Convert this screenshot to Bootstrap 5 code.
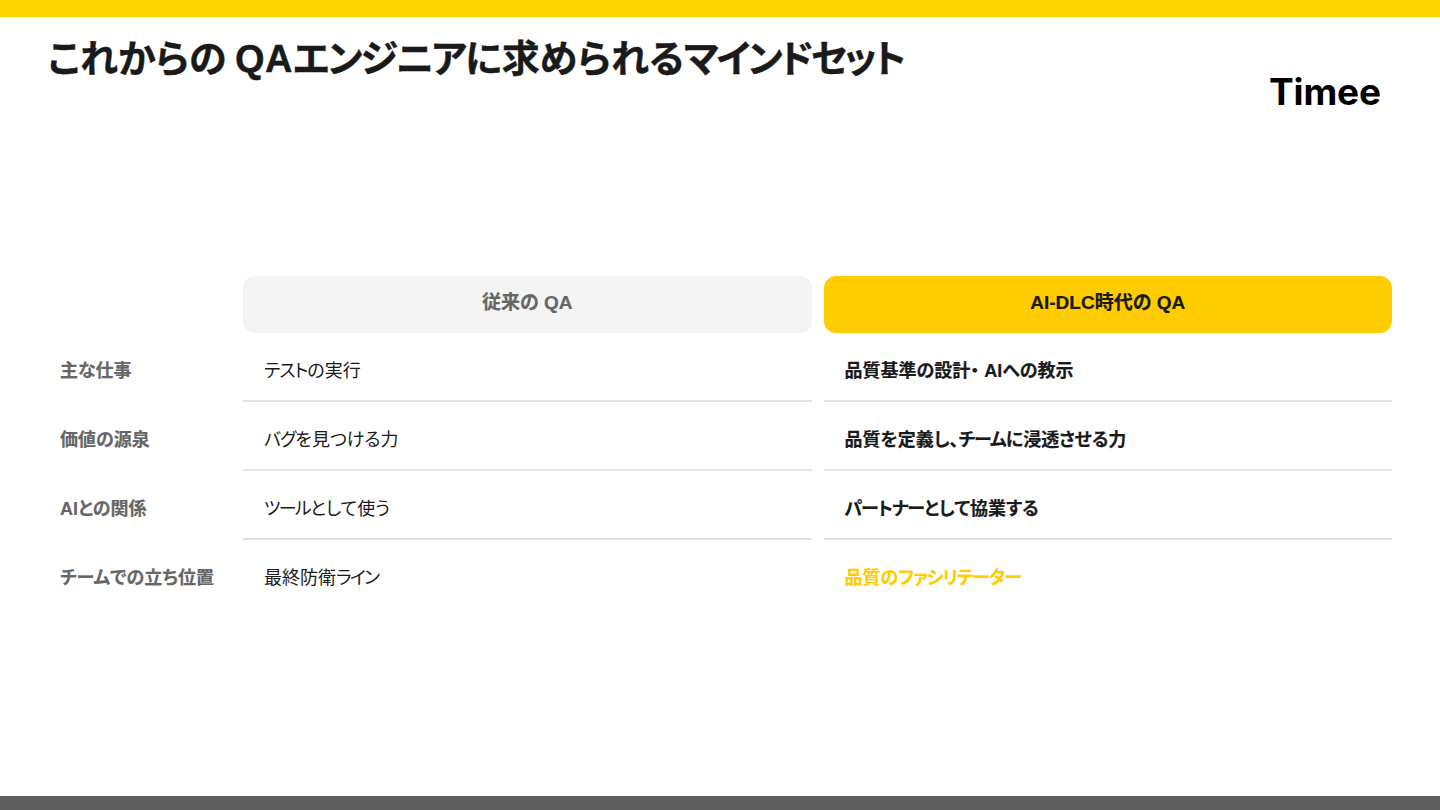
<!DOCTYPE html>
<html lang="ja">
<head>
<meta charset="utf-8">
<title>これからの QAエンジニアに求められるマインドセット</title>
<link href="https://cdn.jsdelivr.net/npm/bootstrap@5.3.0/dist/css/bootstrap.min.css" rel="stylesheet">
<style>
html,body{height:810px;overflow:hidden;background:#fff}
body{font-family:"Liberation Sans","Noto Sans CJK JP",sans-serif;color:#1a1a1a;font-feature-settings:"palt"}
.slide-top{height:17px;background:#ffd700;flex:none}
.slide-bottom{height:14px;background:#5f5f5f;flex:none}
.slide-head{height:259px;padding:20px 48px 0;flex:none}
.slide-title{font-size:38px;font-weight:700;line-height:44px;margin:0;color:#1a1a1a;-webkit-text-stroke:.4px #1a1a1a;word-spacing:-2px}
.slide-title .kata-a{letter-spacing:-1.8px}
.slide-title .kata-b{letter-spacing:-2.6px}
.slide-title .latin{letter-spacing:.5px}
.kata{letter-spacing:-1px}
.kata-wide{letter-spacing:-1.7px}
.brand-word{font-family:Inter,sans-serif;font-weight:700;font-size:37px;line-height:40px;margin:35px 11px 0 0;color:#000;letter-spacing:-.1px}
.cmp-grid{display:grid;grid-template-columns:183px 568.5px 568.5px;column-gap:12px;padding:0 48px}
.cmp-head{height:57px;border-radius:12px;font-size:19px;font-weight:700;line-height:54px;text-align:center;-webkit-text-stroke:.2px}
.cmp-head-old{background:#f4f4f4;color:#666}
.cmp-head-new{background:#ffcc00;color:#1a1a1a}
.cmp-label{height:69px;padding-left:12px;font-size:18px;font-weight:700;color:#666;line-height:77px;-webkit-text-stroke:.2px}
.cmp-cell{height:69px;padding-left:21px;font-size:18px;line-height:77px;color:#1a1a1a;border-bottom:2px solid #e3e3e3}
.cmp-cell.last{border-bottom:0}
.cmp-strong{font-weight:700;-webkit-text-stroke:.2px}
.cmp-accent{font-weight:700;color:#ffcc00;-webkit-text-stroke:.2px}
</style>
</head>
<body class="d-flex flex-column">
<div class="slide-top"></div>
<header class="slide-head d-flex justify-content-between align-items-start">
  <h1 class="slide-title">これからの <span class="latin">QA</span><span class="kata-a">エンジニア</span>に求められる<span class="kata-b">マインドセット</span></h1>
  <div class="brand-word">Timee</div>
</header>
<main class="flex-grow-1">
  <div class="cmp-grid">
    <div></div>
    <div class="cmp-head cmp-head-old">従来の QA</div>
    <div class="cmp-head cmp-head-new">AI-DLC時代の QA</div>

    <div class="cmp-label">主な仕事</div>
    <div class="cmp-cell"><span class="kata">テスト</span>の実行</div>
    <div class="cmp-cell cmp-strong">品質基準の設計・ AIへの教示</div>

    <div class="cmp-label">価値の源泉</div>
    <div class="cmp-cell"><span class="kata">バグ</span>を見つける力</div>
    <div class="cmp-cell cmp-strong">品質を定義し、<span class="kata">チーム</span>に浸透させる力</div>

    <div class="cmp-label">AIとの関係</div>
    <div class="cmp-cell"><span class="kata-wide">ツール</span>として使う</div>
    <div class="cmp-cell cmp-strong"><span class="kata">パートナー</span>として協業する</div>

    <div class="cmp-label">チームでの立ち位置</div>
    <div class="cmp-cell last">最終防衛<span class="kata-wide">ライン</span></div>
    <div class="cmp-cell last cmp-accent">品質の<span class="kata">ファシリテーター</span></div>
  </div>
</main>
<div class="slide-bottom"></div>
<script src="https://cdn.jsdelivr.net/npm/bootstrap@5.3.0/dist/js/bootstrap.bundle.min.js"></script>
</body>
</html>
